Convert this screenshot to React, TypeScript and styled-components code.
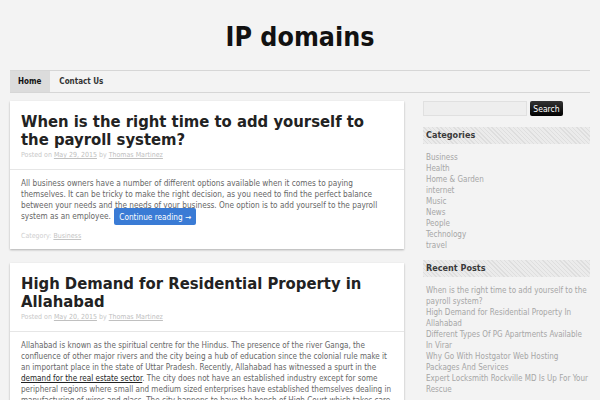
import React from "react";
import styled, { createGlobalStyle } from "styled-components";

const Global = createGlobalStyle`
  html, body { margin: 0; padding: 0; overflow: hidden; }
  body {
    background: #f3f3f3;
    font-family: "DejaVu Sans Condensed", "DejaVu Sans", sans-serif;
    color: #666;
  }
  * { box-sizing: border-box; }
`;

const Header = styled.header`
  padding-top: 22px;
  height: 70px;
  text-align: center;
`;

const SiteTitle = styled.h1`
  margin: 0;
  font-size: 26.6px;
  line-height: 30px;
  font-weight: bold;
  color: #111;
`;

const Nav = styled.nav`
  margin: 0 10px;
  height: 23px;
  border-top: 1px solid #d6d6d6;
  border-bottom: 1px solid #d6d6d6;
  display: flex;
`;

const NavItem = styled.a<{ $active?: boolean }>`
  display: flex;
  align-items: center;
  padding: 0 9px 0 ${(p) => (p.$active ? "8px" : "9px")};
  font-size: 8px;
  font-weight: bold;
  color: ${(p) => (p.$active ? "#111" : "#333")};
  background: ${(p) => (p.$active ? "#dcdcdc" : "transparent")};
  text-decoration: none;
`;

const Layout = styled.div`
  display: flex;
  gap: 19px;
  padding: 8px 10px 0;
  align-items: flex-start;
`;

const Main = styled.main`
  width: 394px;
  display: flex;
  flex-direction: column;
  gap: 14px;
`;

const Card = styled.article`
  background: #fff;
  box-shadow: 0 1px 2px rgba(0, 0, 0, 0.28);
`;

const CardHead = styled.div`
  padding: 12px 11px 8px;
  border-bottom: 1px solid #e6e6e6;
`;

const PostTitle = styled.h2`
  margin: 0;
  font-size: 16.5px;
  line-height: 17.5px;
  font-weight: bold;
  color: #222;
`;

const Meta = styled.div`
  margin-top: 1px;
  font-size: 7px;
  line-height: 12px;
  color: #c8c8c8;
  a { color: #c0c0c0; text-decoration: underline; }
`;

const CardBody = styled.div`
  padding: 8px 11px 7px;
`;

const Para = styled.p<{ $size: number }>`
  margin: 0;
  font-size: ${(p) => p.$size}px;
  line-height: 11px;
  color: #666;
`;

const InlineLink = styled.a`
  color: #222;
  text-decoration: underline;
`;

const ReadMore = styled.a`
  background: #3a7bd5;
  color: #fff;
  padding: 3.5px 5px;
  border-radius: 2px;
  text-decoration: none;
  margin-left: 1px;
`;

const Category = styled.div`
  margin-top: 9px;
  font-size: 7px;
  line-height: 11px;
  color: #cfcfcf;
  a { color: #c4c4c4; text-decoration: underline; }
`;

const Sidebar = styled.aside`
  width: 167px;
`;

const SearchRow = styled.form`
  display: flex;
  gap: 3px;
  margin: 0 0 11px;
`;

const SearchInput = styled.input`
  width: 104px;
  height: 15px;
  background: #eee;
  border: 1px solid #e0e0e0;
  padding: 0;
`;

const SearchButton = styled.button`
  width: 33px;
  height: 15px;
  background: linear-gradient(#333, #000);
  color: #fff;
  border: 0;
  border-radius: 2px;
  padding: 0;
  font-family: inherit;
  font-size: 8.5px;
`;

const WidgetTitle = styled.h3`
  margin: 0;
  height: 17px;
  padding-left: 3px;
  font-size: 9px;
  line-height: 17px;
  font-weight: bold;
  color: #3a3a3a;
  background: repeating-linear-gradient(
    45deg,
    #dedede 0px,
    #dedede 1px,
    #ebebeb 1px,
    #ebebeb 3px
  );
`;

const WidgetList = styled.ul`
  list-style: none;
  margin: 0;
  padding: 8px 0 9px 3px;
`;

const WidgetItem = styled.li`
  font-size: 8px;
  line-height: 11px;
  color: #a6a6a6;
`;

const categories = [
  "Business",
  "Health",
  "Home & Garden",
  "internet",
  "Music",
  "News",
  "People",
  "Technology",
  "travel",
];

const recent = [
  "When is the right time to add yourself to the payroll system?",
  "High Demand for Residential Property In Allahabad",
  "Different Types Of PG Apartments Available In Virar",
  "Why Go With Hostgator Web Hosting Packages And Services",
  "Expert Locksmith Rockville MD Is Up For Your Rescue",
];

export default function App() {
  return (
    <>
      <Global />
      <Header>
        <SiteTitle>IP domains</SiteTitle>
      </Header>
      <Nav>
        <NavItem $active href="#">Home</NavItem>
        <NavItem href="#">Contact Us</NavItem>
      </Nav>
      <Layout>
        <Main>
          <Card>
            <CardHead>
              <PostTitle>When is the right time to add yourself to the payroll system?</PostTitle>
              <Meta>
                Posted on <a href="#">May 29, 2015</a> by <a href="#">Thomas Martinez</a>
              </Meta>
            </CardHead>
            <CardBody>
              <Para $size={8.2}>
                All business owners have a number of different options available when it comes to paying
                themselves. It can be tricky to make the right decision, as you need to find the perfect balance
                between your needs and the needs of your business. One option is to add yourself to the payroll
                system as an employee. <ReadMore href="#">Continue reading →</ReadMore>
              </Para>
              <Category>
                Category: <a href="#">Business</a>
              </Category>
            </CardBody>
          </Card>
          <Card>
            <CardHead>
              <PostTitle>High Demand for Residential Property in Allahabad</PostTitle>
              <Meta>
                Posted on <a href="#">May 20, 2015</a> by <a href="#">Thomas Martinez</a>
              </Meta>
            </CardHead>
            <CardBody>
              <Para $size={8.05}>
                Allahabad is known as the spiritual centre for the Hindus. The presence of the river Ganga, the
                confluence of other major rivers and the city being a hub of education since the colonial rule make it
                an important place in the state of Uttar Pradesh. Recently, Allahabad has witnessed a spurt in the{" "}
                <InlineLink href="#">demand for the real estate sector</InlineLink>. The city does not have an
                established industry except for some peripheral regions where small and medium sized enterprises have
                established themselves dealing in manufacturing of wires and glass. The city happens to have the bench
                of High Court which takes care of the legal matters of the state and attracts many people.
              </Para>
            </CardBody>
          </Card>
        </Main>
        <Sidebar>
          <SearchRow onSubmit={(e) => e.preventDefault()}>
            <SearchInput type="text" />
            <SearchButton type="submit">Search</SearchButton>
          </SearchRow>
          <WidgetTitle>Categories</WidgetTitle>
          <WidgetList>
            {categories.map((c) => (
              <WidgetItem key={c}>{c}</WidgetItem>
            ))}
          </WidgetList>
          <WidgetTitle>Recent Posts</WidgetTitle>
          <WidgetList>
            {recent.map((c) => (
              <WidgetItem key={c}>{c}</WidgetItem>
            ))}
          </WidgetList>
        </Sidebar>
      </Layout>
    </>
  );
}
